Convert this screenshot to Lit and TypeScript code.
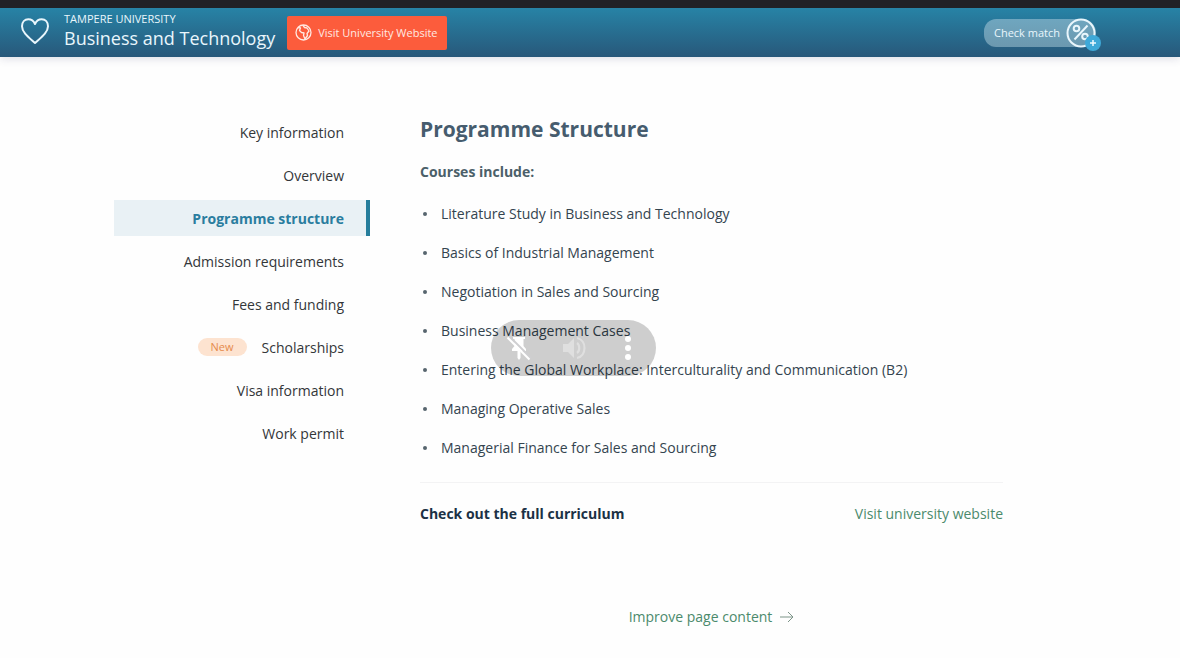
import { LitElement, html, css, svg } from "lit";
import { customElement, property, state } from "lit/decorators.js";
import { classMap } from "lit/directives/class-map.js";

interface Section {
  id: string;
  label: string;
  isNew?: boolean;
}

const SECTIONS: Section[] = [
  { id: "key-information", label: "Key information" },
  { id: "overview", label: "Overview" },
  { id: "structure", label: "Programme structure" },
  { id: "admission", label: "Admission requirements" },
  { id: "fees", label: "Fees and funding" },
  { id: "scholarships", label: "Scholarships", isNew: true },
  { id: "visa", label: "Visa information" },
  { id: "work-permit", label: "Work permit" },
];

const COURSES = [
  "Literature Study in Business and Technology",
  "Basics of Industrial Management",
  "Negotiation in Sales and Sourcing",
  "Business Management Cases",
  "Entering the Global Workplace: Interculturality and Communication (B2)",
  "Managing Operative Sales",
  "Managerial Finance for Sales and Sourcing",
];

@customElement("programme-header")
export class ProgrammeHeader extends LitElement {
  static styles = css`
    :host {
      display: block;
      position: relative;
      border-top: 8px solid #212126;
      box-shadow: 0 2px 8px rgba(60, 60, 110, 0.16);
    }
    .bar {
      display: flex;
      align-items: center;
      box-sizing: border-box;
      height: 49px;
      padding: 0 84px 0 20px;
      background: linear-gradient(#2783a6, #28587a);
      color: #e9f6fc;
    }
    button {
      border: 0;
      padding: 0;
      background: none;
      color: inherit;
      font: inherit;
      cursor: pointer;
    }
    svg {
      display: block;
    }
    .save {
      margin-right: 14px;
      padding-bottom: 4px;
    }
    .title {
      padding-bottom: 3px;
    }
    .university {
      margin: 0;
      font-size: 11px;
      line-height: 14px;
      text-transform: uppercase;
    }
    .name {
      margin: 0;
      font-size: 18px;
      font-weight: 400;
      line-height: 24px;
    }
    .visit {
      display: flex;
      align-items: center;
      gap: 6px;
      height: 34px;
      margin-left: 12px;
      padding: 0 9px 0 8px;
      border-radius: 2px;
      background: #fc5c3c;
      color: #ffe9e2;
      font-size: 11px;
      text-decoration: none;
    }
    .match {
      position: relative;
      display: flex;
      align-items: center;
      gap: 6px;
      height: 28px;
      margin-left: auto;
      padding-left: 10px;
      border-radius: 14px 16px 16px 14px;
      background: linear-gradient(#6fa6bf, #6c98af);
      font-size: 11px;
    }
    .plus {
      position: absolute;
      right: -5px;
      bottom: -4px;
    }
  `;

  @property() university = "";
  @property() name = "";

  render() {
    return html`
      <header class="bar">
        <button class="save" aria-label="Save programme">
          <svg width="30" height="28" viewBox="0 0 30 28" fill="none" stroke="currentColor" stroke-width="2">
            <path d="M15 26C9 20.500 2 15.500 2 9.200C2 5 4.700 2.200 8.300 2.200C11.400 2.200 13.700 4 15 7C16.300 4 18.600 2.200 21.700 2.200C25.300 2.200 28 5 28 9.200C28 15.500 21 20.500 15 26Z" stroke-linejoin="round" />
          </svg>
        </button>
        <div class="title">
          <p class="university">${this.university}</p>
          <h1 class="name">${this.name}</h1>
        </div>
        <a class="visit" href="#website">
          <svg width="17" height="17" viewBox="0 0 17 17" fill="none" stroke="currentColor" stroke-width="1.300" stroke-linejoin="round">
            <circle cx="8.500" cy="8.500" r="7.500" />
            <path d="M3 3.500L5.500 4L4.500 6.500L6.500 8.500L9 9L8.500 11.500L10 15L12.500 11.500L12 9.500L14 7L12 4L9.500 3.500L8 1.500" />
          </svg>
          Visit University Website
        </a>
        <button class="match">
          Check match
          <svg width="30" height="30" viewBox="0 0 30 30" fill="none" stroke="currentColor" stroke-width="2">
            <circle cx="15" cy="15" r="13.500" />
            <circle cx="10.500" cy="10.500" r="2.800" />
            <circle cx="19" cy="18.500" r="2.800" />
            <path d="M21.500 7.500L8.500 21.500" />
          </svg>
          <svg class="plus" width="16" height="16" viewBox="0 0 16 16">
            <circle cx="8" cy="8" r="8" fill="#3fa9d8" />
            <path d="M8 5V11M5 8H11" stroke="#eefaff" stroke-width="1.500" />
          </svg>
        </button>
      </header>
    `;
  }
}

@customElement("section-nav")
export class SectionNav extends LitElement {
  static styles = css`
    :host {
      display: block;
    }
    ul {
      display: flex;
      flex-direction: column;
      gap: 7px;
      margin: 0;
      padding: 0;
      list-style: none;
    }
    .link {
      display: flex;
      align-items: center;
      justify-content: flex-end;
      gap: 15px;
      height: 36px;
      padding-right: 22px;
      border-right: 4px solid transparent;
      color: #333639;
      font-size: 14px;
      text-decoration: none;
    }
    .current {
      border-color: #257d9b;
      background: #e9f1f5;
      color: #2a7d9f;
      font-weight: 700;
    }
    .badge {
      padding: 0 13px;
      border-radius: 9px;
      background: #fde3d0;
      color: #e58a4b;
      font-size: 11px;
      line-height: 18px;
    }
  `;

  @property({ attribute: false }) sections: Section[] = [];
  @state() private current = "structure";

  render() {
    return html`
      <nav aria-label="Programme sections">
        <ul>
          ${this.sections.map(
            (s) => html`<li>
              <a
                class=${classMap({ link: true, current: s.id === this.current })}
                href="#${s.id}"
                @click=${() => (this.current = s.id)}
                >${s.isNew ? html`<span class="badge">New</span>` : null}<span>${s.label}</span></a
              >
            </li>`
          )}
        </ul>
      </nav>
    `;
  }
}

@customElement("call-controls")
export class CallControls extends LitElement {
  static styles = css`
    :host {
      display: flex;
      align-items: center;
      justify-content: space-between;
      box-sizing: border-box;
      padding: 0 10px;
      border-radius: 28px;
      background: rgba(0, 0, 0, 0.19);
    }
    button {
      display: grid;
      place-items: center;
      width: 36px;
      height: 36px;
      padding: 0;
      border: 0;
      background: none;
      color: #fff;
    }
    .muted {
      opacity: 0.35;
    }
  `;

  private icon(name: string) {
    if (name === "pin") {
      return svg`<path d="M8 3H20V5H18.500V12L21 15V17H15.500V24L14 26L12.500 24V17H7V15L9.500 12V5H8Z" fill="currentColor" /><path d="M4.500 2.500L26 24" stroke="#cfcfd1" stroke-width="2" /><path d="M2.500 3.500L24.500 25.500" stroke="currentColor" stroke-width="2" />`;
    }
    if (name === "sound") {
      return svg`<path d="M3 10H8L14 4V24L8 18H3Z" fill="currentColor" /><path d="M17 9C20 11 20 17 17 19M17 4C27 6 27 22 17 24" fill="none" stroke="currentColor" stroke-width="2.200" />`;
    }
    return svg`<circle cx="14" cy="5" r="3" fill="currentColor" /><circle cx="14" cy="14" r="3" fill="currentColor" /><circle cx="14" cy="23" r="3" fill="currentColor" />`;
  }

  render() {
    return html`
      <button aria-label="Unpin"><svg width="28" height="28" viewBox="0 0 28 28">${this.icon("pin")}</svg></button>
      <button class="muted" aria-label="Sound"><svg width="28" height="28" viewBox="0 0 28 28">${this.icon("sound")}</svg></button>
      <button aria-label="More options"><svg width="28" height="28" viewBox="0 0 28 28">${this.icon("more")}</svg></button>
    `;
  }
}

@customElement("app-root")
export class AppRoot extends LitElement {
  static styles = css`
    :host {
      display: block;
      position: relative;
      min-height: 100vh;
      background: #fefefe;
      font-family: "Open Sans", "Noto Sans", sans-serif;
    }
    .page {
      display: grid;
      grid-template-columns: 256px minmax(0, 1fr);
      gap: 50px;
      max-width: 952px;
      margin: 0 auto;
      padding-top: 57px;
    }
    .content {
      padding-right: 63px;
      color: #34444f;
      font-size: 14px;
    }
    h2 {
      margin: 0;
      color: #465c6e;
      font-size: 21px;
      line-height: 30px;
    }
    h3 {
      margin: 18px 0 0;
      color: #4b6069;
      font-size: 14px;
      line-height: 20px;
    }
    .courses {
      display: grid;
      gap: 19px;
      margin: 22px 0 0;
      padding: 0;
      list-style: none;
      line-height: 20px;
    }
    .courses li {
      display: flex;
      align-items: center;
      gap: 14px;
    }
    .courses li::before {
      content: "";
      width: 4px;
      height: 4px;
      margin-left: 3px;
      border-radius: 50%;
      background: #57656e;
    }
    .more {
      display: flex;
      justify-content: space-between;
      margin-top: 24px;
      padding-top: 21px;
      border-top: 1px solid #f3f3f4;
      line-height: 20px;
    }
    .lead {
      color: #1b3145;
      font-weight: 700;
    }
    .action {
      color: #4b8a6c;
      text-decoration: none;
    }
    .improve {
      display: flex;
      align-items: center;
      justify-content: center;
      gap: 8px;
      margin: 83px 0 30px;
      line-height: 20px;
    }
    .overlay {
      position: absolute;
      top: 320px;
      left: calc(50% - 99px);
      width: 165px;
      height: 56px;
    }
  `;

  render() {
    return html`
      <programme-header university="Tampere University" name="Business and Technology"></programme-header>
      <div class="page">
        <section-nav .sections=${SECTIONS}></section-nav>
        <main class="content">
          <h2>Programme Structure</h2>
          <h3>Courses include:</h3>
          <ul class="courses">
            ${COURSES.map((c) => html`<li>${c}</li>`)}
          </ul>
          <div class="more">
            <span class="lead">Check out the full curriculum</span>
            <a class="action" href="#website">Visit university website</a>
          </div>
          <a class="action improve" href="#improve">
            Improve page content
            <svg width="14" height="12" viewBox="0 0 14 12" fill="none" stroke="#7d9488">
              <path d="M0 6H13M8 1L13 6L8 11" />
            </svg>
          </a>
        </main>
      </div>
      <call-controls class="overlay"></call-controls>
    `;
  }
}
